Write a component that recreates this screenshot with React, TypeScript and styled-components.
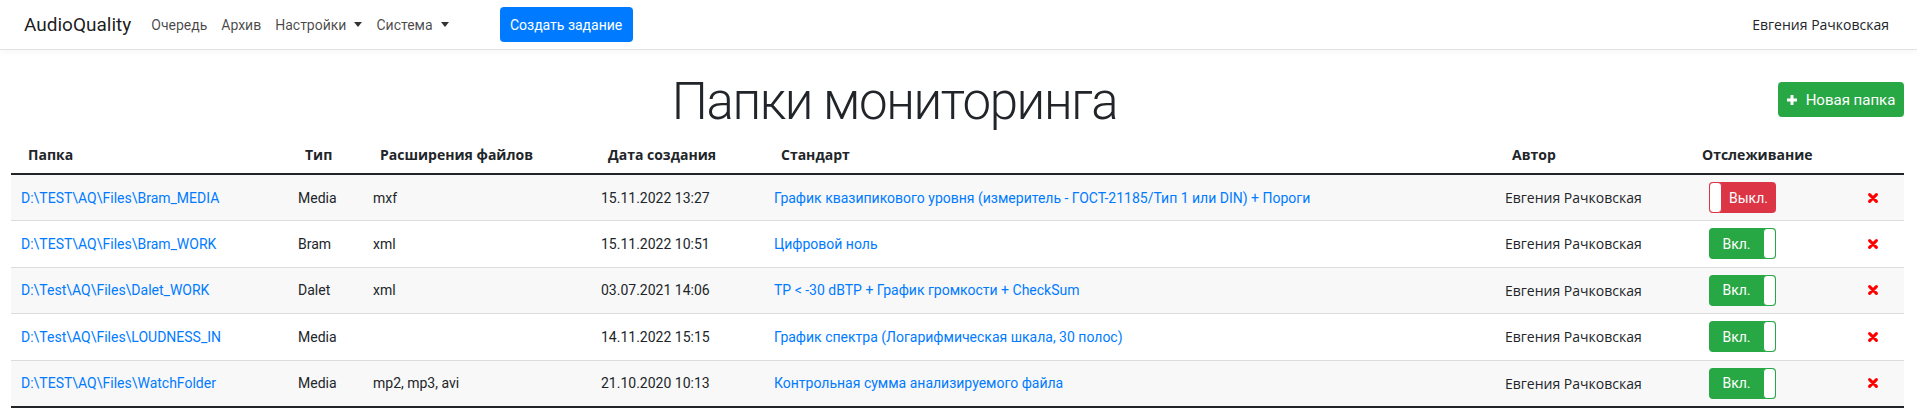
import React from "react";
import styled, { createGlobalStyle, css } from "styled-components";

const GlobalStyle = createGlobalStyle`
    body {
        margin: 0;
        background: #fff;
        color: #212529;
        font-family: Roboto, "Liberation Sans", sans-serif;
        font-size: 14px;
    }
    * { box-sizing: border-box; }
`;

const uiFont = `"Open Sans", "Noto Sans", sans-serif`;

const Navbar = styled.nav`
    display: flex;
    align-items: center;
    height: 50px;
    padding: 0 28px 0 24px;
    border-bottom: 1px solid #e2e2e6;
    box-shadow: 0 2px 6px rgba(0, 0, 0, 0.04);
`;

const Brand = styled.a`
    font-size: 19px;
    color: rgba(0, 0, 0, 0.9);
    margin-right: 13px;
    text-decoration: none;
`;

const NavLink = styled.a<{ $dropdown?: boolean }>`
    padding: 0 7px;
    font-size: 14px;
    color: rgba(0, 0, 0, 0.72);
    text-decoration: none;
    display: flex;
    align-items: center;

    ${(p) => p.$dropdown && css`
        &::after {
            content: "";
            display: inline-block;
            margin-left: 8px;
            border-top: 5px solid rgba(0, 0, 0, 0.8);
            border-left: 4px solid transparent;
            border-right: 4px solid transparent;
        }
    `}
`;

const CreateButton = styled.button`
    margin-left: 44px;
    width: 133px;
    height: 35px;
    padding: 0;
    border: none;
    border-radius: 4px;
    background: #007bff;
    color: #fff;
    font-family: Roboto, sans-serif;
    font-size: 14px;
`;

const UserName = styled.span`
    margin-left: auto;
    font-family: ${uiFont};
    font-size: 14px;
    color: #212529;
`;

const Main = styled.main`
    padding: 0 13px 0 11px;
`;

const TitleRow = styled.div`
    display: flex;
    align-items: flex-start;
    padding-top: 18px;
`;

const Title = styled.h1`
    flex: 1;
    margin: 0;
    text-align: center;
    font-size: 51px;
    font-weight: 300;
    letter-spacing: -1.4px;
    line-height: 68px;
    color: #212529;
`;

const NewFolderButton = styled.button`
    margin-top: 14px;
    width: 126px;
    height: 35px;
    display: flex;
    align-items: center;
    justify-content: center;
    gap: 9px;
    border: none;
    border-radius: 4px;
    background: #28a745;
    color: #fff;
    font-family: Roboto, sans-serif;
    font-size: 15px;
`;

const Table = styled.table`
    width: 100%;
    border-collapse: collapse;
    table-layout: fixed;
`;

const Th = styled.th`
    padding: 8px 4px 8px 17px;
    height: 38px;
    text-align: left;
    font-family: ${uiFont};
    font-size: 14px;
    font-weight: 700;
    line-height: 20px;
    border-bottom: 2px solid #212529;
    white-space: nowrap;
`;

const Row = styled.tr`
    &:nth-child(odd) { background: #f8f8f8; }
    &:last-child td { border-bottom: 2px solid #212529; }
`;

const Td = styled.td<{ $pad?: number; $author?: boolean }>`
    height: 46.5px;
    padding: 0 4px 0 ${(p) => p.$pad ?? 10}px;
    border-bottom: 1px solid #dcdcdc;
    font-size: 14px;
    white-space: nowrap;
    vertical-align: middle;
    ${(p) => p.$author && css`
        font-family: ${uiFont};
    `}
`;

const Link = styled.a`
    color: #007bff;
    text-decoration: none;
`;

const Toggle = styled.div<{ $on: boolean }>`
    position: relative;
    width: 67px;
    height: 31px;
    border-radius: 4px;
    background: ${(p) => (p.$on ? "#28a745" : "#dc3545")};
    color: #fff;
    font-size: 14px;
    display: flex;
    align-items: center;
    justify-content: center;
    padding: ${(p) => (p.$on ? "0 12px 0 0" : "0 0 0 12px")};
`;

const Knob = styled.span<{ $on: boolean }>`
    position: absolute;
    top: 0;
    bottom: 0;
    width: 13px;
    ${(p) => (p.$on ? "right: 0;" : "left: 0;")}
    background: #fff;
    border: 1px solid ${(p) => (p.$on ? "#28a745" : "#dc3545")};
    border-radius: 4px;
`;

const PlusIcon = () => (
    <svg width="10" height="10" viewBox="0 0 10 10">
        <path d="M5 0.5v9M0.5 5h9" stroke="#fff" strokeWidth="3" strokeLinecap="round" />
    </svg>
);

const RemoveIcon = () => (
    <svg width="10" height="10" viewBox="0 0 10 10" style={{ display: "block" }}>
        <path d="M1.6 1.6L8.4 8.4M8.4 1.6L1.6 8.4" stroke="#ff0000" strokeWidth="3" strokeLinecap="round" />
    </svg>
);

type Folder = {
    path: string;
    type: string;
    ext: string;
    date: string;
    standard: string;
    author: string;
    on: boolean;
};

const folders: Folder[] = [
    { path: "D:\\TEST\\AQ\\Files\\Bram_MEDIA", type: "Media", ext: "mxf", date: "15.11.2022 13:27", standard: "График квазипикового уровня (измеритель - ГОСТ-21185/Тип 1 или DIN) + Пороги", author: "Евгения Рачковская", on: false },
    { path: "D:\\TEST\\AQ\\Files\\Bram_WORK", type: "Bram", ext: "xml", date: "15.11.2022 10:51", standard: "Цифровой ноль", author: "Евгения Рачковская", on: true },
    { path: "D:\\Test\\AQ\\Files\\Dalet_WORK", type: "Dalet", ext: "xml", date: "03.07.2021 14:06", standard: "TP < -30 dBTP + График громкости + CheckSum", author: "Евгения Рачковская", on: true },
    { path: "D:\\Test\\AQ\\Files\\LOUDNESS_IN", type: "Media", ext: "", date: "14.11.2022 15:15", standard: "График спектра (Логарифмическая шкала, 30 полос)", author: "Евгения Рачковская", on: true },
    { path: "D:\\TEST\\AQ\\Files\\WatchFolder", type: "Media", ext: "mp2, mp3, avi", date: "21.10.2020 10:13", standard: "Контрольная сумма анализируемого файла", author: "Евгения Рачковская", on: true },
];

const columns = [277, 75, 228, 173, 731, 190, 173, 46];

const App: React.FC = () => {
    return <>
        <GlobalStyle />
        <Navbar>
            <Brand href="#">AudioQuality</Brand>
            <NavLink href="#">Очередь</NavLink>
            <NavLink href="#">Архив</NavLink>
            <NavLink href="#" $dropdown>Настройки</NavLink>
            <NavLink href="#" $dropdown>Система</NavLink>
            <CreateButton>Создать задание</CreateButton>
            <UserName>Евгения Рачковская</UserName>
        </Navbar>
        <Main>
            <TitleRow>
                <Title>Папки мониторинга</Title>
                <NewFolderButton><PlusIcon />Новая папка</NewFolderButton>
            </TitleRow>
            <Table>
                <colgroup>
                    {columns.map((w, i) => <col key={i} style={{ width: w }} />)}
                </colgroup>
                <thead>
                    <tr>
                        <Th>Папка</Th>
                        <Th>Тип</Th>
                        <Th>Расширения файлов</Th>
                        <Th>Дата создания</Th>
                        <Th>Стандарт</Th>
                        <Th>Автор</Th>
                        <Th>Отслеживание</Th>
                        <Th />
                    </tr>
                </thead>
                <tbody>
                    {folders.map((f) => (
                        <Row key={f.path}>
                            <Td><Link href="#">{f.path}</Link></Td>
                            <Td>{f.type}</Td>
                            <Td>{f.ext}</Td>
                            <Td>{f.date}</Td>
                            <Td><Link href="#">{f.standard}</Link></Td>
                            <Td $author>{f.author}</Td>
                            <Td $pad={24}>
                                <Toggle $on={f.on}>
                                    <Knob $on={f.on} />
                                    {f.on ? "Вкл." : "Выкл."}
                                </Toggle>
                            </Td>
                            <Td><RemoveIcon /></Td>
                        </Row>
                    ))}
                </tbody>
            </Table>
        </Main>
    </>;
};

export default App;
